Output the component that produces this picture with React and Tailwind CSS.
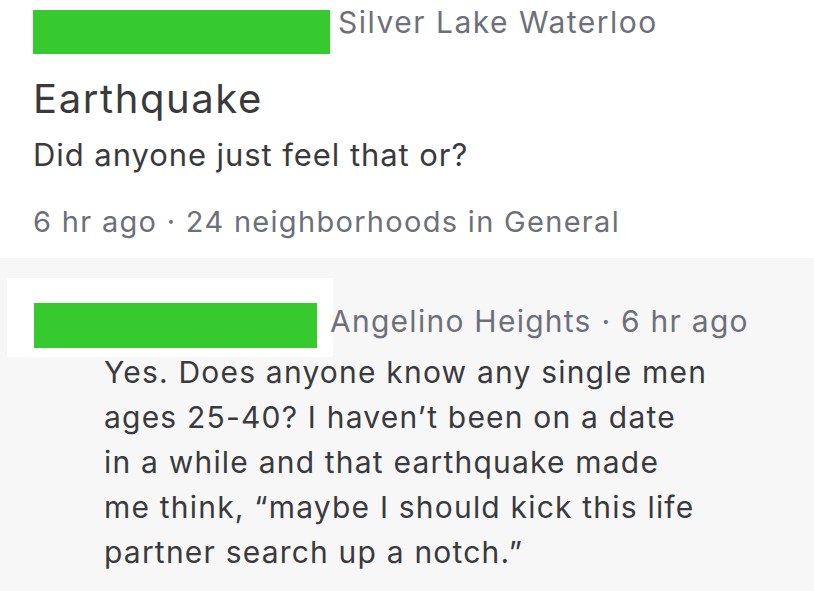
export default function App() {
  const body = [
    "Yes. Does anyone know any single men",
    "ages 25-40? I haven\u2019t been on a date",
    "in a while and that earthquake made",
    "me think, \u201cmaybe I should kick this life",
    "partner search up a notch.\u201d",
  ];

  return (
    <div className="w-[814px] h-[591px] overflow-hidden bg-white font-['Inter',sans-serif] antialiased">
      {/* post */}
      <div className="h-[258px] pl-[33px] pt-[10px]">
        <div className="flex items-start gap-[8px]">
          <div className="w-[297px] h-[44px] bg-[#36ca2e]" />
          <span className="text-[30px] leading-[25px] tracking-[0.05em] text-[#6e7079] whitespace-nowrap">
            Silver Lake Waterloo
          </span>
        </div>
        <h1 className="mt-[21px] text-[40px] leading-[48px] tracking-[0.04em] text-[#3a3a3d]">
          Earthquake
        </h1>
        <p className="mt-[12px] text-[31px] leading-[40px] tracking-[0.03em] text-[#3a3a3d]">
          Did anyone just feel that or?
        </p>
        <p className="mt-[29px] text-[29px] leading-[36px] tracking-[0.045em] text-[#6e7079] whitespace-nowrap">
          6 hr ago · 24 neighborhoods in General
        </p>
      </div>

      {/* comment */}
      <div className="h-[333px] bg-[#f7f7f8] pt-[20px]">
        <div className="flex items-start">
          <div className="ml-[7px] pt-[25px] pl-[27px] pr-[16px] pb-[9px] bg-white">
            <div className="w-[283px] h-[45px] bg-[#36ca2e]" />
          </div>
          <span className="-ml-[3px] mt-[28px] text-[30px] leading-[31px] tracking-[0.042em] text-[#6e7079] whitespace-nowrap">
            Angelino Heights · 6 hr ago
          </span>
        </div>
        <div className="-mt-[7px] ml-[104px] text-[30px] leading-[45px] tracking-[0.04em] text-[#3a3a3d]">
          {body.map((line) => (
            <div key={line} className="whitespace-nowrap">
              {line}
            </div>
          ))}
        </div>
      </div>
    </div>
  );
}
